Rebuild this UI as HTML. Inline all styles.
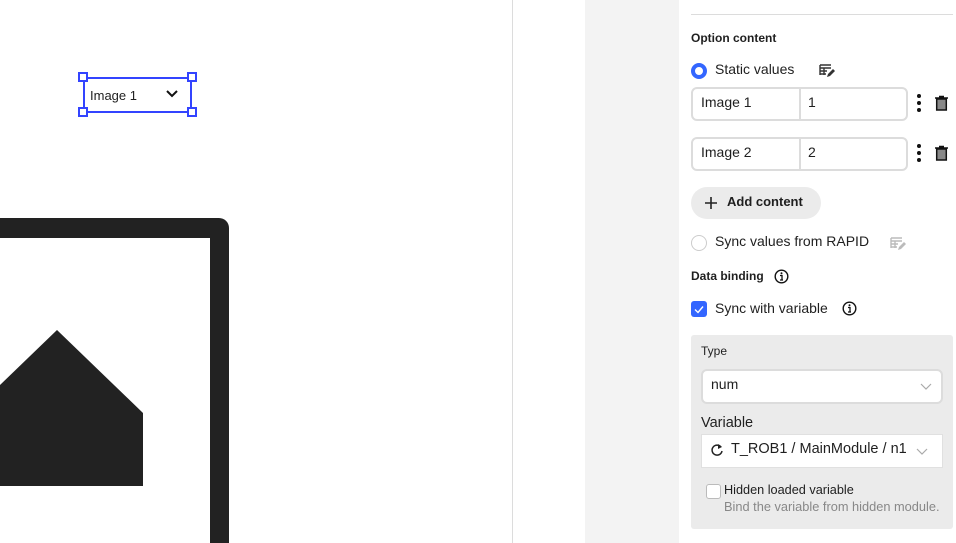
<!DOCTYPE html>
<html><head><meta charset="utf-8"><style>
*{margin:0;padding:0;box-sizing:border-box}
body{width:956px;height:543px;overflow:hidden;position:relative;background:#fff;font-family:"Liberation Sans",sans-serif;color:#1f1f1f}
.a{position:absolute}
.t{font-size:14px;white-space:nowrap}
.inp{position:absolute;border:2px solid #dcdcdc;border-radius:6px;background:#fff}
</style></head><body>
<div class="a" style="left:512px;top:0;width:1px;height:543px;background:#dcdcdc"></div>
<div class="a" style="left:585px;top:0;width:94px;height:543px;background:#f3f3f3"></div>
<div class="a" style="left:691px;top:14px;width:262px;height:1px;background:#dcdcdc"></div>

<div class="a" style="left:83px;top:77px;width:109px;height:36px;border:2px solid #3344ff"></div>
<div class="a" style="left:78px;top:72px;width:10px;height:10px;border:2px solid #3344ff;background:#fff"></div>
<div class="a" style="left:187px;top:72px;width:10px;height:10px;border:2px solid #3344ff;background:#fff"></div>
<div class="a" style="left:78px;top:107px;width:10px;height:10px;border:2px solid #3344ff;background:#fff"></div>
<div class="a" style="left:187px;top:107px;width:10px;height:10px;border:2px solid #3344ff;background:#fff"></div>
<div class="a" style="left:90px;top:88px;font-size:13px">Image 1</div>
<svg class="a" style="left:165px;top:89px" width="14" height="10"><path d="M2 2l5 5 5-5" stroke="#111" stroke-width="2" fill="none"/></svg>

<svg class="a" style="left:0;top:0" width="300" height="543">
<path d="M-20 218H219a10 10 0 0 1 10 10V560H210V238H-20Z" fill="#222"/>
<path d="M0 385L57 330L143 413V486H0Z" fill="#222"/>
</svg>

<div class="a t" style="left:691px;top:31px;font-size:12px;font-weight:bold">Option content</div>
<div class="a" style="left:691px;top:63px;width:16px;height:16px;border-radius:50%;border:4px solid #3366ff"></div>
<div class="a t" style="left:715px;top:61px">Static values</div>
<svg class="a" style="left:819px;top:64px" width="16" height="15"><path d="M1 1h11M1 4h11M1 7h7M1 10h6M1 1v10M5 4v7" stroke="#333" stroke-width="1.4" fill="none"/><path d="M8 13l1-3 5-5 2 2-5 5z" fill="#333"/></svg>

<div class="inp" style="left:691px;top:87px;width:217px;height:34px"></div>
<div class="a" style="left:799px;top:89px;width:2px;height:30px;background:#dcdcdc"></div>
<div class="a t" style="left:701px;top:94px">Image 1</div>
<div class="a t" style="left:808px;top:94px">1</div>
<div class="inp" style="left:691px;top:137px;width:217px;height:34px"></div>
<div class="a" style="left:799px;top:139px;width:2px;height:30px;background:#dcdcdc"></div>
<div class="a t" style="left:701px;top:144px">Image 2</div>
<div class="a t" style="left:808px;top:144px">2</div>
<svg class="a" style="left:914px;top:93px" width="40" height="80">
<circle cx="5" cy="3" r="2" fill="#111"/><circle cx="5" cy="10" r="2" fill="#111"/><circle cx="5" cy="17" r="2" fill="#111"/>
<circle cx="5" cy="53" r="2" fill="#111"/><circle cx="5" cy="60" r="2" fill="#111"/><circle cx="5" cy="67" r="2" fill="#111"/>
<path d="M21 5h13M25 3.5h5" stroke="#111" stroke-width="1.5"/><rect x="22.7" y="6" width="9.6" height="11" fill="#888" stroke="#111" stroke-width="1.5"/>
<path d="M21 55h13M25 53.5h5" stroke="#111" stroke-width="1.5"/><rect x="22.7" y="56" width="9.6" height="11" fill="#888" stroke="#111" stroke-width="1.5"/>
</svg>

<div class="a" style="left:691px;top:187px;width:130px;height:32px;border-radius:16px;background:#ebebeb"></div>
<svg class="a" style="left:704px;top:196px" width="14" height="14"><path d="M7 1v12M1 7h12" stroke="#222" stroke-width="1.6"/></svg>
<div class="a t" style="left:727px;top:194px;font-weight:bold;font-size:13px">Add content</div>

<div class="a" style="left:691px;top:235px;width:16px;height:16px;border-radius:50%;border:1.5px solid #ccc"></div>
<div class="a t" style="left:715px;top:233px">Sync values from RAPID</div>
<svg class="a" style="left:890px;top:237px" width="16" height="15"><path d="M1 1h11M1 4h11M1 7h7M1 10h6M1 1v10M5 4v7" stroke="#bbb" stroke-width="1.4" fill="none"/><path d="M8 13l1-3 5-5 2 2-5 5z" fill="#bbb"/></svg>

<div class="a t" style="left:691px;top:269px;font-size:12px;font-weight:bold">Data binding</div>
<svg class="a" style="left:774px;top:269px" width="15" height="15"><circle cx="7.5" cy="7.5" r="6.3" fill="none" stroke="#111" stroke-width="1.4"/><circle cx="7.5" cy="4.3" r="1" fill="#111"/><path d="M6 6.5h2v4.5M6 11h3" stroke="#111" stroke-width="1.3" fill="none"/></svg>

<div class="a" style="left:691px;top:301px;width:16px;height:16px;border-radius:3px;background:#3366ff"></div>
<svg class="a" style="left:691px;top:301px" width="16" height="16"><path d="M4 8.5l3 3 5-6" stroke="#fff" stroke-width="1.4" fill="none"/></svg>
<div class="a t" style="left:715px;top:300px">Sync with variable</div>
<svg class="a" style="left:842px;top:301px" width="15" height="15"><circle cx="7.5" cy="7.5" r="6.3" fill="none" stroke="#111" stroke-width="1.4"/><circle cx="7.5" cy="4.3" r="1" fill="#111"/><path d="M6 6.5h2v4.5M6 11h3" stroke="#111" stroke-width="1.3" fill="none"/></svg>

<div class="a" style="left:691px;top:335px;width:262px;height:194px;background:#ebebeb;border-radius:3px"></div>
<div class="a t" style="left:701px;top:344px;font-size:12px">Type</div>
<div class="inp" style="left:701px;top:369px;width:242px;height:35px;border-radius:6px"></div>
<div class="a t" style="left:711px;top:376px">num</div>
<svg class="a" style="left:919px;top:382px" width="14" height="9"><path d="M2 2l5 5 5-5" stroke="#aaa" stroke-width="1.2" fill="none"/></svg>
<div class="a t" style="left:701px;top:415px;font-size:14.5px">Variable</div>
<div class="a" style="left:701px;top:434px;width:242px;height:34px;background:#fff;border:1.5px solid #e0e0e0"></div>
<svg class="a" style="left:710px;top:443px" width="14" height="14"><path d="M11 4A5 5 0 1 0 12 8" stroke="#222" stroke-width="1.5" fill="none"/><path d="M8 1l4 3-4 2z" fill="#222"/></svg>
<div class="a t" style="left:731px;top:441px;font-size:14.5px">T_ROB1 / MainModule / n1</div>
<svg class="a" style="left:915px;top:447px" width="14" height="9"><path d="M2 2l5 5 5-5" stroke="#aaa" stroke-width="1.2" fill="none"/></svg>
<div class="a" style="left:706px;top:484px;width:15px;height:15px;border:1.5px solid #bbb;border-radius:3px;background:#fff"></div>
<div class="a t" style="left:724px;top:483px;font-size:12.7px">Hidden loaded variable</div>
<div class="a t" style="left:724px;top:499px;font-size:12.8px;color:#888">Bind the variable from hidden module.</div>
</body></html>
